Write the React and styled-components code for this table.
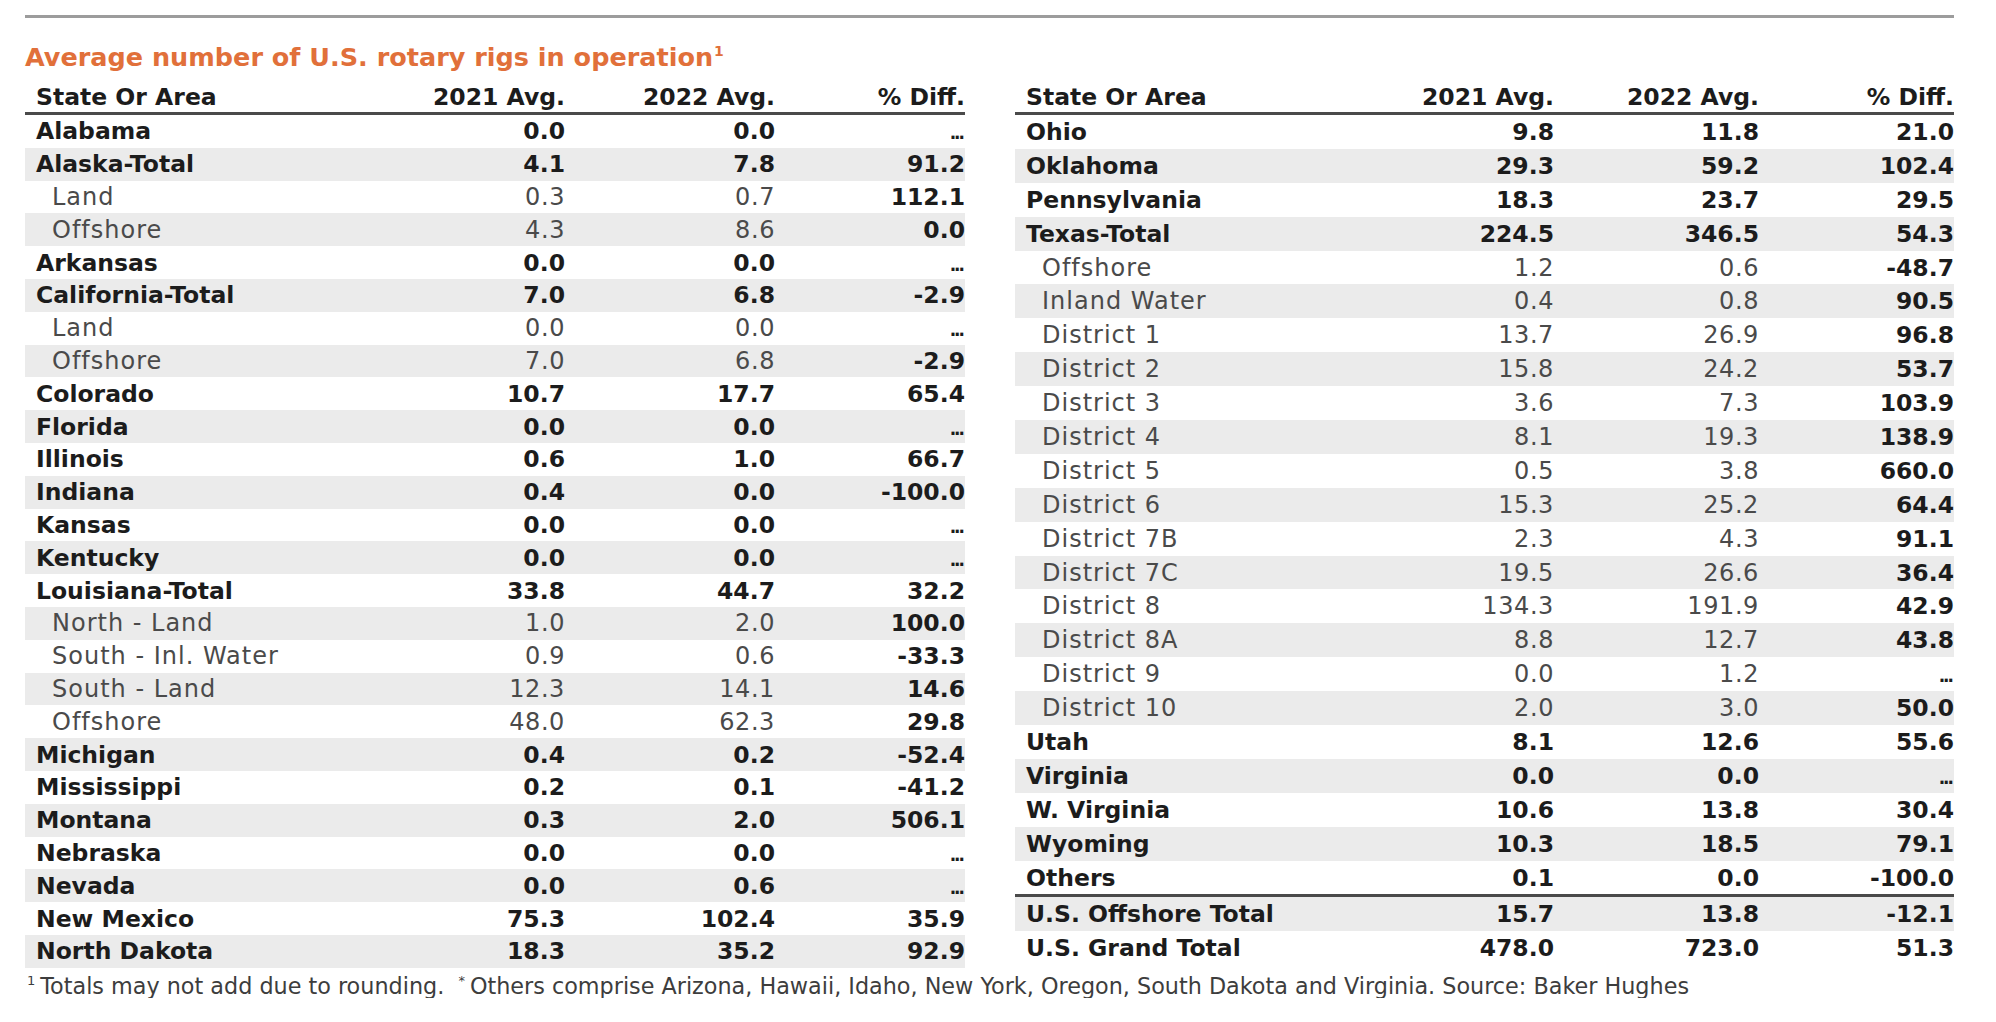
import styled, { createGlobalStyle } from "styled-components";

const GlobalStyle = createGlobalStyle`
  * {
    box-sizing: border-box;
  }

  body {
    margin: 0;
    background: #ffffff;
    font-family: "DejaVu Sans", "Liberation Sans", sans-serif;
  }
`;

const leftRows = [
  ["Alabama", "0.0", "0.0", "..."],
  ["Alaska-Total", "4.1", "7.8", "91.2"],
  ["Land", "0.3", "0.7", "112.1", true],
  ["Offshore", "4.3", "8.6", "0.0", true],
  ["Arkansas", "0.0", "0.0", "..."],
  ["California-Total", "7.0", "6.8", "-2.9"],
  ["Land", "0.0", "0.0", "...", true],
  ["Offshore", "7.0", "6.8", "-2.9", true],
  ["Colorado", "10.7", "17.7", "65.4"],
  ["Florida", "0.0", "0.0", "..."],
  ["Illinois", "0.6", "1.0", "66.7"],
  ["Indiana", "0.4", "0.0", "-100.0"],
  ["Kansas", "0.0", "0.0", "..."],
  ["Kentucky", "0.0", "0.0", "..."],
  ["Louisiana-Total", "33.8", "44.7", "32.2"],
  ["North - Land", "1.0", "2.0", "100.0", true],
  ["South - Inl. Water", "0.9", "0.6", "-33.3", true],
  ["South - Land", "12.3", "14.1", "14.6", true],
  ["Offshore", "48.0", "62.3", "29.8", true],
  ["Michigan", "0.4", "0.2", "-52.4"],
  ["Mississippi", "0.2", "0.1", "-41.2"],
  ["Montana", "0.3", "2.0", "506.1"],
  ["Nebraska", "0.0", "0.0", "..."],
  ["Nevada", "0.0", "0.6", "..."],
  ["New Mexico", "75.3", "102.4", "35.9"],
  ["North Dakota", "18.3", "35.2", "92.9"],
];

const rightRows = [
  ["Ohio", "9.8", "11.8", "21.0"],
  ["Oklahoma", "29.3", "59.2", "102.4"],
  ["Pennsylvania", "18.3", "23.7", "29.5"],
  ["Texas-Total", "224.5", "346.5", "54.3"],
  ["Offshore", "1.2", "0.6", "-48.7", true],
  ["Inland Water", "0.4", "0.8", "90.5", true],
  ["District 1", "13.7", "26.9", "96.8", true],
  ["District 2", "15.8", "24.2", "53.7", true],
  ["District 3", "3.6", "7.3", "103.9", true],
  ["District 4", "8.1", "19.3", "138.9", true],
  ["District 5", "0.5", "3.8", "660.0", true],
  ["District 6", "15.3", "25.2", "64.4", true],
  ["District 7B", "2.3", "4.3", "91.1", true],
  ["District 7C", "19.5", "26.6", "36.4", true],
  ["District 8", "134.3", "191.9", "42.9", true],
  ["District 8A", "8.8", "12.7", "43.8", true],
  ["District 9", "0.0", "1.2", "...", true],
  ["District 10", "2.0", "3.0", "50.0", true],
  ["Utah", "8.1", "12.6", "55.6"],
  ["Virginia", "0.0", "0.0", "..."],
  ["W. Virginia", "10.6", "13.8", "30.4"],
  ["Wyoming", "10.3", "18.5", "79.1"],
  ["Others", "0.1", "0.0", "-100.0"],
  ["U.S. Offshore Total", "15.7", "13.8", "-12.1", false, true],
  ["U.S. Grand Total", "478.0", "723.0", "51.3"],
];

const RigTable = ({ rows, cols, width, rowHeight }) => {
  return (
    <TableBox $w={width}>
      <HeaderRow $cols={cols}>
        <span>State Or Area</span>
        <NumHead>2021 Avg.</NumHead>
        <NumHead>2022 Avg.</NumHead>
        <NumHead>% Diff.</NumHead>
      </HeaderRow>
      {rows.map(([name, a, b, diff, sub, sep], i) => (
        <Row
          key={name + i}
          $cols={cols}
          $h={rowHeight}
          $striped={i % 2 === 1}
          $sep={sep}
        >
          <NameCell $sub={sub}>{name}</NameCell>
          <NumCell $sub={sub}>{a}</NumCell>
          <NumCell $sub={sub}>{b}</NumCell>
          <PctCell>{diff === "..." ? <Dots>...</Dots> : diff}</PctCell>
        </Row>
      ))}
    </TableBox>
  );
};

const App = () => {
  return (
    <Page>
      <GlobalStyle />
      <TopRule />
      <Title>
        Average number of U.S. rotary rigs in operation<Sup>1</Sup>
      </Title>
      <Tables>
        <RigTable
          rows={leftRows}
          width={940}
          cols="1fr 140px 210px 190px"
          rowHeight={32.8}
        />
        <RigTable
          rows={rightRows}
          width={939}
          cols="1fr 140px 205px 195px"
          rowHeight={33.9}
        />
      </Tables>
      <Footnote>
        <FootSup>1</FootSup>Totals may not add due to rounding.{"  "}
        <FootSup>*</FootSup>Others comprise Arizona, Hawaii, Idaho, New York,
        Oregon, South Dakota and Virginia. Source: Baker Hughes
      </Footnote>
    </Page>
  );
};

export default App;

const Page = styled.div`
  width: 1954px;
  padding: 15px 0 0 25px;
`;

const TopRule = styled.div`
  height: 3px;
  background-color: #9c9c9c;
  margin-bottom: 24px;
`;

const Title = styled.h2`
  margin: 0 0 11px 0;
  font-size: 25.5px;
  line-height: 30px;
  font-weight: 700;
  color: #e1703a;
`;

const Sup = styled.sup`
  font-size: 14px;
  line-height: 0;
  vertical-align: top;
  position: relative;
  top: 9px;
  margin-left: 1px;
`;

const Tables = styled.div`
  display: flex;
  gap: 50px;
`;

const TableBox = styled.div`
  display: flex;
  flex-direction: column;
  width: ${(p) => p.$w}px;
`;

const HeaderRow = styled.div`
  display: grid;
  grid-template-columns: ${(p) => p.$cols};
  align-items: center;
  height: 32px;
  padding-left: 11px;
  border-bottom: 3px solid #4a4a4a;
  font-size: 23.5px;
  font-weight: 700;
  color: #1c1c1c;
  line-height: 29px;
  white-space: nowrap;
`;

const NumHead = styled.span`
  text-align: right;
`;

const Row = styled.div`
  display: grid;
  grid-template-columns: ${(p) => p.$cols};
  align-items: center;
  height: ${(p) => (p.$sep ? p.$h + 3 : p.$h)}px;
  padding-left: 11px;
  background-color: ${(p) => (p.$striped ? "#ebebeb" : "#ffffff")};
  border-top: ${(p) => (p.$sep ? "3px solid #4a4a4a" : "none")};
  color: #1c1c1c;
  white-space: nowrap;
`;

const NameCell = styled.span`
  padding-left: ${(p) => (p.$sub ? "16px" : "0")};
  font-size: ${(p) => (p.$sub ? "24px" : "23.5px")};
  font-weight: ${(p) => (p.$sub ? 400 : 700)};
  letter-spacing: ${(p) => (p.$sub ? "1px" : "0")};
  color: ${(p) => (p.$sub ? "#4a4a4a" : "#1c1c1c")};
`;

const NumCell = styled.span`
  text-align: right;
  font-size: ${(p) => (p.$sub ? "24px" : "23.5px")};
  font-weight: ${(p) => (p.$sub ? 400 : 700)};
  letter-spacing: ${(p) => (p.$sub ? "0.6px" : "0")};
  color: ${(p) => (p.$sub ? "#4a4a4a" : "#1c1c1c")};
`;

const PctCell = styled.span`
  text-align: right;
  font-size: 23.5px;
  font-weight: 700;
  color: #1c1c1c;
`;

const Dots = styled.span`
  font-size: 17px;
  letter-spacing: -2px;
  margin-right: 2px;
`;

const Footnote = styled.p`
  margin: 6px 0 0 2px;
  font-size: 22.3px;
  line-height: 24px;
  color: #3d3d3d;
  white-space: pre-wrap;
`;

const FootSup = styled.sup`
  font-size: 13px;
  line-height: 0;
  vertical-align: top;
  position: relative;
  top: 7px;
  margin-right: 5px;
`;
